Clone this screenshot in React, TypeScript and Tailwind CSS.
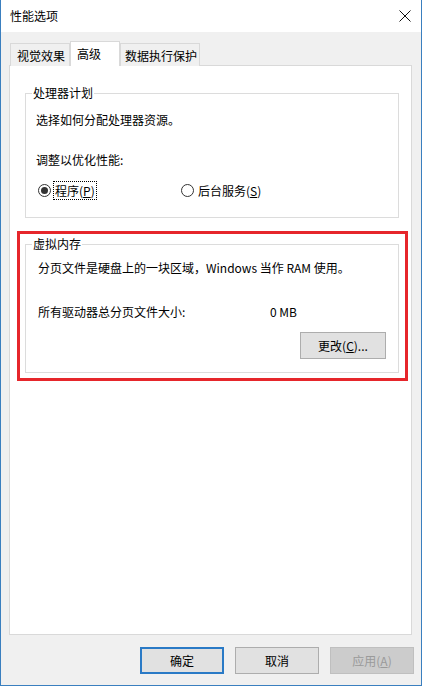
const font = { fontFamily: '"Noto Sans CJK SC", "Noto Sans", sans-serif' };

function Radio({ checked }: { checked?: boolean }) {
  return (
    <span className="flex h-[13px] w-[13px] shrink-0 items-center justify-center rounded-full border border-[#333] bg-white">
      {checked && <span className="h-[7px] w-[7px] rounded-full bg-[#333]" />}
    </span>
  );
}

function Button({ children, variant }: { children: React.ReactNode; variant?: "default" | "primary" | "disabled" }) {
  const cls =
    variant === "primary"
      ? "border-2 border-[#2a7ac6] bg-[#e1e1e1] text-black"
      : variant === "disabled"
      ? "border border-[#bfbfbf] bg-[#cccccc] text-[#9a9a9a]"
      : "border border-[#adadad] bg-[#e1e1e1] text-black";
  return (
    <div className={`flex h-[27px] w-[84px] items-center justify-center text-[12px] leading-[16px] ${cls}`}>
      {children}
    </div>
  );
}

export default function App() {
  return (
    <div className="flex h-[686px] w-[422px] flex-col border border-t-0 border-[#3a7fbf] bg-[#f0f0f0] text-black" style={font}>
      {/* title bar */}
      <div className="flex h-[32px] shrink-0 items-center justify-between bg-white pl-[9px] pr-[9px]">
        <span className="text-[12px] leading-[16px]">性能选项</span>
        <svg width="12" height="12" viewBox="0 0 12 12" className="mr-[1px]">
          <path d="M0.5 0.5 L11.5 11.5 M11.5 0.5 L0.5 11.5" stroke="#111" strokeWidth="1" fill="none" />
        </svg>
      </div>

      {/* client */}
      <div className="flex flex-1 flex-col pl-[8px] pr-[9px] pt-[9px]">
        {/* tabs */}
        <div className="relative z-10 -mb-px flex items-end pl-[1px] text-[12px] leading-[16px]">
          <div className="flex h-[23px] w-[60px] items-center border border-b-0 border-[#d9d9d9] bg-[#f0f0f0] pl-[6px] pt-[2px]">视觉效果</div>
          <div className="flex h-[25px] w-[50px] items-start border border-b-0 border-[#d9d9d9] bg-white pl-[6px] pt-[4px]">高级</div>
          <div className="flex h-[23px] w-[80px] items-center border border-b-0 border-[#d9d9d9] bg-[#f0f0f0] pl-[4px] pt-[2px]">数据执行保护</div>
        </div>

        {/* tab page */}
        <div className="flex flex-1 flex-col border border-[#d9d9d9] bg-white text-[12px] leading-[16px]">
          <fieldset className="ml-[15px] mr-[12px] mt-[20px] border border-[#dcdcdc] pb-[17px]">
            <legend className="ml-[6px] px-[1px] leading-[14px]">处理器计划</legend>
            <div className="mt-[12px] h-[16px] pl-[10px]">选择如何分配处理器资源。</div>
            <div className="mt-[24px] h-[16px] pl-[10px]">调整以优化性能:</div>
            <div className="mt-[12px] flex h-[20px] items-center pl-[12px]">
              <div className="flex w-[143px] items-center">
                <Radio checked />
                <span className="ml-[2px] border border-dotted border-black px-[1px] leading-[17px]">
                  程序(<span className="underline">P</span>)
                </span>
              </div>
              <div className="flex items-center">
                <Radio />
                <span className="ml-[3px] px-[1px] leading-[17px]">
                  后台服务(<span className="underline">S</span>)
                </span>
              </div>
            </div>
          </fieldset>

          {/* highlighted virtual memory group */}
          <div className="ml-[7px] mr-[3px] mt-[13px] border-[3px] border-[#e6262b] pb-[5px] pl-[5px] pr-[6px] pt-[3px]">
            <fieldset className="border border-[#dcdcdc] pb-[13px]">
              <legend className="ml-[6px] px-[1px] leading-[14px]">虚拟内存</legend>
              <div className="mt-[9px] h-[16px] pl-[12px]">分页文件是硬盘上的一块区域，Windows 当作 RAM 使用。</div>
              <div className="mt-[28px] flex h-[16px] pl-[12px]">
                <span className="w-[232px]">所有驱动器总分页文件大小:</span>
                <span>0 MB</span>
              </div>
              <div className="mr-[12px] mt-[12px] flex justify-end">
                <div className="flex h-[27px] w-[86px] items-center justify-center border border-[#adadad] bg-[#e1e1e1]">
                  更改(<span className="underline">C</span>)...
                </div>
              </div>
            </fieldset>
          </div>
        </div>

        {/* footer buttons */}
        <div className="mb-[11px] mr-[-2px] mt-[12px] flex justify-end gap-[11px]">
          <Button variant="primary">确定</Button>
          <Button>取消</Button>
          <Button variant="disabled">
            应用(<span className="underline">A</span>)
          </Button>
        </div>
      </div>
    </div>
  );
}
